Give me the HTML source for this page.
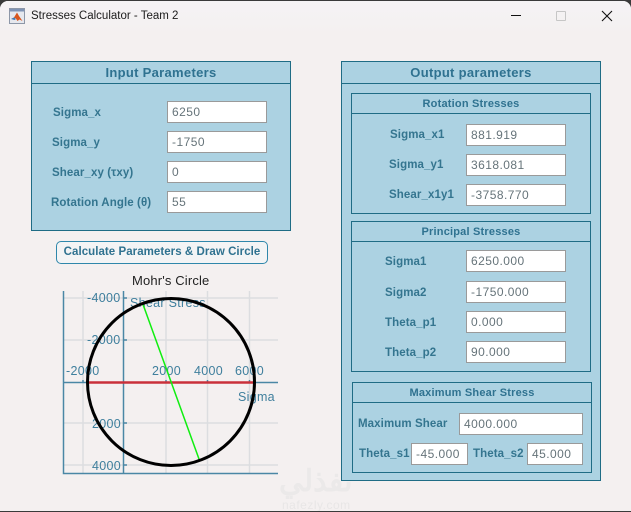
<!DOCTYPE html>
<html><head><meta charset="utf-8">
<style>
html,body{margin:0;padding:0;width:631px;height:512px;overflow:hidden;background:#3a3a3a}
*{box-sizing:border-box}
#w{position:absolute;left:0;top:1px;width:631px;height:510px;background:#f4f0f0;border-radius:8px 8px 0 0;overflow:hidden;font-family:"Liberation Sans",sans-serif}
#t{position:absolute;left:0;top:0;width:631px;height:34px;background:linear-gradient(#f5f3f5,#f4f0f0)}
.a{position:absolute;white-space:nowrap}
.p{position:absolute;background:#acd2e2;border:1px solid #1f6c85}
.h{position:absolute;left:0;right:0;top:0;border-bottom:1px solid #1f6c85;text-align:center;color:#2f7290;font-weight:bold}
.l{position:absolute;white-space:nowrap;color:#34758f;font-weight:bold;font-size:11.5px;line-height:14px;letter-spacing:.1px}
.i{position:absolute;background:#fff;border:1px solid #9a9a9a;color:#66747a;font-size:12px;line-height:20px;padding-left:4px;height:22px;letter-spacing:.45px}
</style></head><body>
<div id="w">
<div id="t"></div>
<svg class="a" style="left:9px;top:7px" width="17" height="17" viewBox="0 0 17 17"><rect x=".5" y=".5" width="15" height="15" fill="#e6e8ee" stroke="#8d97a8"/><rect x="1" y="1" width="14" height="2.500" fill="#7f93b5"/><path d="M2 11l3-1.500 3-5 2 3.500 3.500 5-3-1.500-2 1.500-2-3z" fill="#d8561f"/><path d="M2 11l3-1.500 2 1.500-1.500 1z" fill="#3f78b5"/></svg>
<div class="a" style="left:31px;top:7px;font-size:11.5px;line-height:16px;color:#1c1c1c">Stresses Calculator - Team 2</div>
<div class="a" style="left:511px;top:14px;width:10px;height:1px;background:#111"></div>
<div class="a" style="left:556px;top:10px;width:10px;height:10px;border:1px solid #c6c6c6;border-radius:1px"></div>
<svg class="a" style="left:601px;top:9px" width="12" height="12" viewBox="0 0 12 12"><path d="M1 1l10 10M11 1L1 11" stroke="#111" stroke-width="1.100" fill="none"/></svg>

<div class="p" style="left:31px;top:60px;width:260px;height:170px">
<div class="h" style="height:22px;font-size:13px;line-height:21px;letter-spacing:.3px">Input Parameters</div>
</div>
<div class="l" style="left:53px;top:105px">Sigma_x</div>
<div class="l" style="left:52px;top:135px">Sigma_y</div>
<div class="l" style="left:52px;top:165px">Shear_xy (τxy)</div>
<div class="l" style="left:51px;top:195px">Rotation Angle (θ)</div>
<div class="i" style="left:167px;top:100px;width:100px">6250</div>
<div class="i" style="left:167px;top:130px;width:100px">-1750</div>
<div class="i" style="left:167px;top:160px;width:100px">0</div>
<div class="i" style="left:167px;top:190px;width:100px">55</div>

<div class="a" style="left:56px;top:240px;width:212px;height:23px;border:1px solid #2f87ab;border-radius:5px;background:#f3f4f5;color:#2f7290;font-weight:bold;font-size:11.5px;line-height:21px;text-align:center;letter-spacing:.05px">Calculate Parameters &amp; Draw Circle</div>

<svg class="a" style="left:0;top:0" width="631" height="510" viewBox="0 1 631 510">
<g stroke="#dcdde0" stroke-width="1.500" fill="none">
<path d="M83 291V473M166 291V473M207.500 291V473M249.500 291V473M63 298H278M63 340H278M63 423H278M63 465H278"/>
</g>
<g stroke="#4a87a5" stroke-width="1.500" fill="none">
<path d="M63.500 291V473.500H278M123.500 291V473.500M63 382.500H278"/>
<path d="M123 298h4M123 340h4M123 423h4M123 465h4M166 380v2M207.500 380v2M249.500 380v2M83 380v2"/>
</g>
<g font-family="Liberation Sans,sans-serif" font-size="12.500" fill="#3f7f9d" letter-spacing=".3">
<text x="87" y="302">-4000</text>
<text x="87" y="344">-2000</text>
<text x="66" y="375">-2000</text>
<text x="152" y="375">2000</text>
<text x="194" y="375">4000</text>
<text x="235" y="375">6000</text>
<text x="92" y="428">2000</text>
<text x="92" y="470">4000</text>
<text x="130" y="307">Shear Stress</text>
<text x="238" y="401">Sigma</text>
</g>
<text x="132" y="285" font-family="Liberation Sans,sans-serif" font-size="13" fill="#222" letter-spacing=".15">Mohr's Circle</text>
<path d="M87 382.500H254" stroke="#c9303a" stroke-width="2.500"/>
<path d="M142.500 303L199 459" stroke="#10ee10" stroke-width="1.500"/>
<circle cx="171" cy="382" r="83.500" fill="none" stroke="#000" stroke-width="3"/>
</svg>

<div class="a" style="left:279px;top:464px;font-family:'Liberation Sans','Noto Sans CJK SC',sans-serif;font-size:30px;line-height:34px;font-weight:bold;color:#ebe9e9">نفذلي</div>
<div class="a" style="left:282px;top:498px;font-size:12px;line-height:12px;color:#e8e6e6;letter-spacing:.5px">nafezly.com</div>

<div class="p" style="left:341px;top:60px;width:260px;height:420px">
<div class="h" style="height:22px;font-size:13px;line-height:21px;letter-spacing:.3px">Output parameters</div>
</div>

<div class="p" style="left:351px;top:92px;width:240px;height:121px">
<div class="h" style="height:20px;font-size:11px;line-height:20px;letter-spacing:.2px">Rotation Stresses</div>
</div>
<div class="l" style="left:390px;top:127px">Sigma_x1</div>
<div class="l" style="left:389px;top:157px">Sigma_y1</div>
<div class="l" style="left:389px;top:187px">Shear_x1y1</div>
<div class="i" style="left:466px;top:123px;width:100px">881.919</div>
<div class="i" style="left:466px;top:153px;width:100px">3618.081</div>
<div class="i" style="left:466px;top:183px;width:100px">-3758.770</div>

<div class="p" style="left:351px;top:220px;width:240px;height:151px">
<div class="h" style="height:20px;font-size:11px;line-height:20px;letter-spacing:.2px">Principal Stresses</div>
</div>
<div class="l" style="left:385px;top:254px">Sigma1</div>
<div class="l" style="left:385px;top:285px">Sigma2</div>
<div class="l" style="left:385px;top:315px">Theta_p1</div>
<div class="l" style="left:385px;top:345px">Theta_p2</div>
<div class="i" style="left:466px;top:249px;width:100px">6250.000</div>
<div class="i" style="left:466px;top:280px;width:100px">-1750.000</div>
<div class="i" style="left:466px;top:310px;width:100px">0.000</div>
<div class="i" style="left:466px;top:340px;width:100px">90.000</div>

<div class="p" style="left:352px;top:381px;width:240px;height:91px">
<div class="h" style="height:20px;font-size:11px;line-height:20px;letter-spacing:.2px">Maximum Shear Stress</div>
</div>
<div class="l" style="left:358px;top:416px">Maximum Shear</div>
<div class="l" style="left:359px;top:446px">Theta_s1</div>
<div class="l" style="left:473px;top:446px">Theta_s2</div>
<div class="i" style="left:459px;top:412px;width:124px">4000.000</div>
<div class="i" style="left:411px;top:442px;width:57px">-45.000</div>
<div class="i" style="left:527px;top:442px;width:56px">45.000</div>
</div>
</body></html>
